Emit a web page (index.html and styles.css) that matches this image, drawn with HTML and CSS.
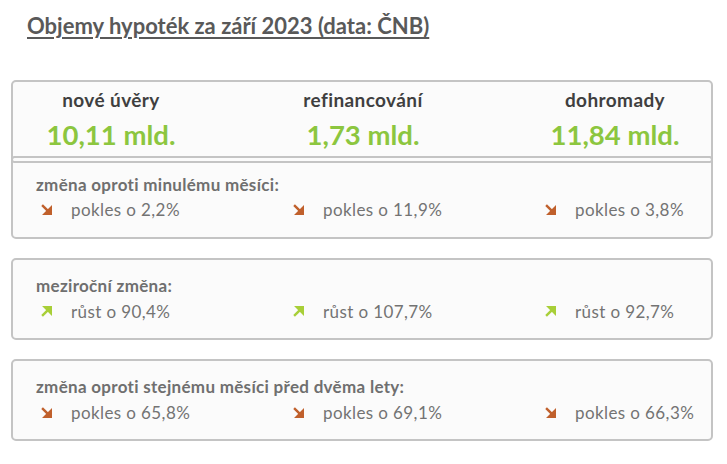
FILE: index.html
```html
<!DOCTYPE html>
<html lang="cs">
<head>
<meta charset="utf-8">
<title>Objemy hypoték</title>
<link rel="stylesheet" href="styles.css">
</head>
<body>
<h1 class="title">Objemy hypoték za září 2023 (data: ČNB)</h1>
<div class="cards">
  <section class="card card-main">
    <div class="heads">
      <div class="col"><div class="head">nové úvěry</div><div class="value">10,11 mld.</div></div>
      <div class="col"><div class="head">refinancování</div><div class="value">1,73 mld.</div></div>
      <div class="col"><div class="head">dohromady</div><div class="value">11,84 mld.</div></div>
    </div>
    <div class="pill"></div>
    <div class="label">změna oproti minulému měsíci:</div>
    <div class="row">
      <div class="cell"><svg class="arr down" viewBox="0 0 10 10"><path d="M1 1 L6.5 6.5"/><polygon points="9.5,3 9.5,9.5 3,9.5"/></svg><span>pokles o 2,2%</span></div>
      <div class="cell"><svg class="arr down" viewBox="0 0 10 10"><path d="M1 1 L6.5 6.5"/><polygon points="9.5,3 9.5,9.5 3,9.5"/></svg><span>pokles o 11,9%</span></div>
      <div class="cell"><svg class="arr down" viewBox="0 0 10 10"><path d="M1 1 L6.5 6.5"/><polygon points="9.5,3 9.5,9.5 3,9.5"/></svg><span>pokles o 3,8%</span></div>
    </div>
  </section>
  <section class="card">
    <div class="label">meziroční změna:</div>
    <div class="row">
      <div class="cell"><svg class="arr up" viewBox="0 0 10 10"><path d="M1 9 L6.5 3.5"/><polygon points="9.5,7 9.5,0.5 3,0.5"/></svg><span>růst o 90,4%</span></div>
      <div class="cell"><svg class="arr up" viewBox="0 0 10 10"><path d="M1 9 L6.5 3.5"/><polygon points="9.5,7 9.5,0.5 3,0.5"/></svg><span>růst o 107,7%</span></div>
      <div class="cell"><svg class="arr up" viewBox="0 0 10 10"><path d="M1 9 L6.5 3.5"/><polygon points="9.5,7 9.5,0.5 3,0.5"/></svg><span>růst o 92,7%</span></div>
    </div>
  </section>
  <section class="card">
    <div class="label">změna oproti stejnému měsíci před dvěma lety:</div>
    <div class="row">
      <div class="cell"><svg class="arr down" viewBox="0 0 10 10"><path d="M1 1 L6.5 6.5"/><polygon points="9.5,3 9.5,9.5 3,9.5"/></svg><span>pokles o 65,8%</span></div>
      <div class="cell"><svg class="arr down" viewBox="0 0 10 10"><path d="M1 1 L6.5 6.5"/><polygon points="9.5,3 9.5,9.5 3,9.5"/></svg><span>pokles o 69,1%</span></div>
      <div class="cell"><svg class="arr down" viewBox="0 0 10 10"><path d="M1 1 L6.5 6.5"/><polygon points="9.5,3 9.5,9.5 3,9.5"/></svg><span>pokles o 66,3%</span></div>
    </div>
  </section>
</div>
</body>
</html>
```
FILE: styles.css
```css
* { box-sizing: border-box; }
body {
  margin: 0;
  background: #ffffff;
  font-family: Lato, "Open Sans", sans-serif;
}
.title {
  margin: 0;
  padding: 11px 0 0 27px;
  font-size: 22px;
  line-height: 30px;
  font-weight: 700;
  color: #595959;
  text-decoration: underline;
  text-decoration-thickness: 2px;
  text-underline-offset: 3px;
}
.cards {
  margin: 39px 0 0 11px;
  width: 702px;
  display: flex;
  flex-direction: column;
  gap: 19px;
}
.card {
  border: 2px solid #c4c4c4;
  border-radius: 5px;
  background: #fbfbfb;
  padding: 16px 0 16px 0;
}
.card .row { margin-top: 4px; }
.card-main { padding-top: 8px; padding-bottom: 17px; }
.card-main .row { margin-top: 3px; }
.heads {
  display: grid;
  grid-template-columns: 194px 194px 194px;
  column-gap: 58px;
  padding-left: 1px;
}
.col { text-align: center; }
.head {
  font-size: 19px;
  line-height: 20px;
  font-weight: 700;
  letter-spacing: 0.4px;
  color: #3f3f3f;
}
.value {
  margin-top: 9px;
  font-size: 27.5px;
  line-height: 32px;
  font-weight: 700;
  color: #8cc63f;
}
.pill {
  margin: 5px -2px 12px -2px;
  height: 7px;
  border: 2px solid #c4c4c4;
  border-radius: 4px;
}
.label {
  padding-left: 23px;
  font-size: 17px;
  line-height: 20px;
  font-weight: 700;
  letter-spacing: 0.3px;
  color: #6f6f6f;
}
.row {
  display: grid;
  grid-template-columns: 252px 252px 180px;
  padding-left: 28px;
}
.cell {
  display: flex;
  align-items: center;
  height: 22px;
  font-size: 17px;
  letter-spacing: 0.4px;
  color: #737373;
}
.arr {
  width: 11px;
  height: 11px;
  margin-right: 19px;
  stroke-width: 2.2;
}
.down { stroke: #c0602c; fill: #c0602c; }
.up { stroke: #a8cf38; fill: #a8cf38; }
```
